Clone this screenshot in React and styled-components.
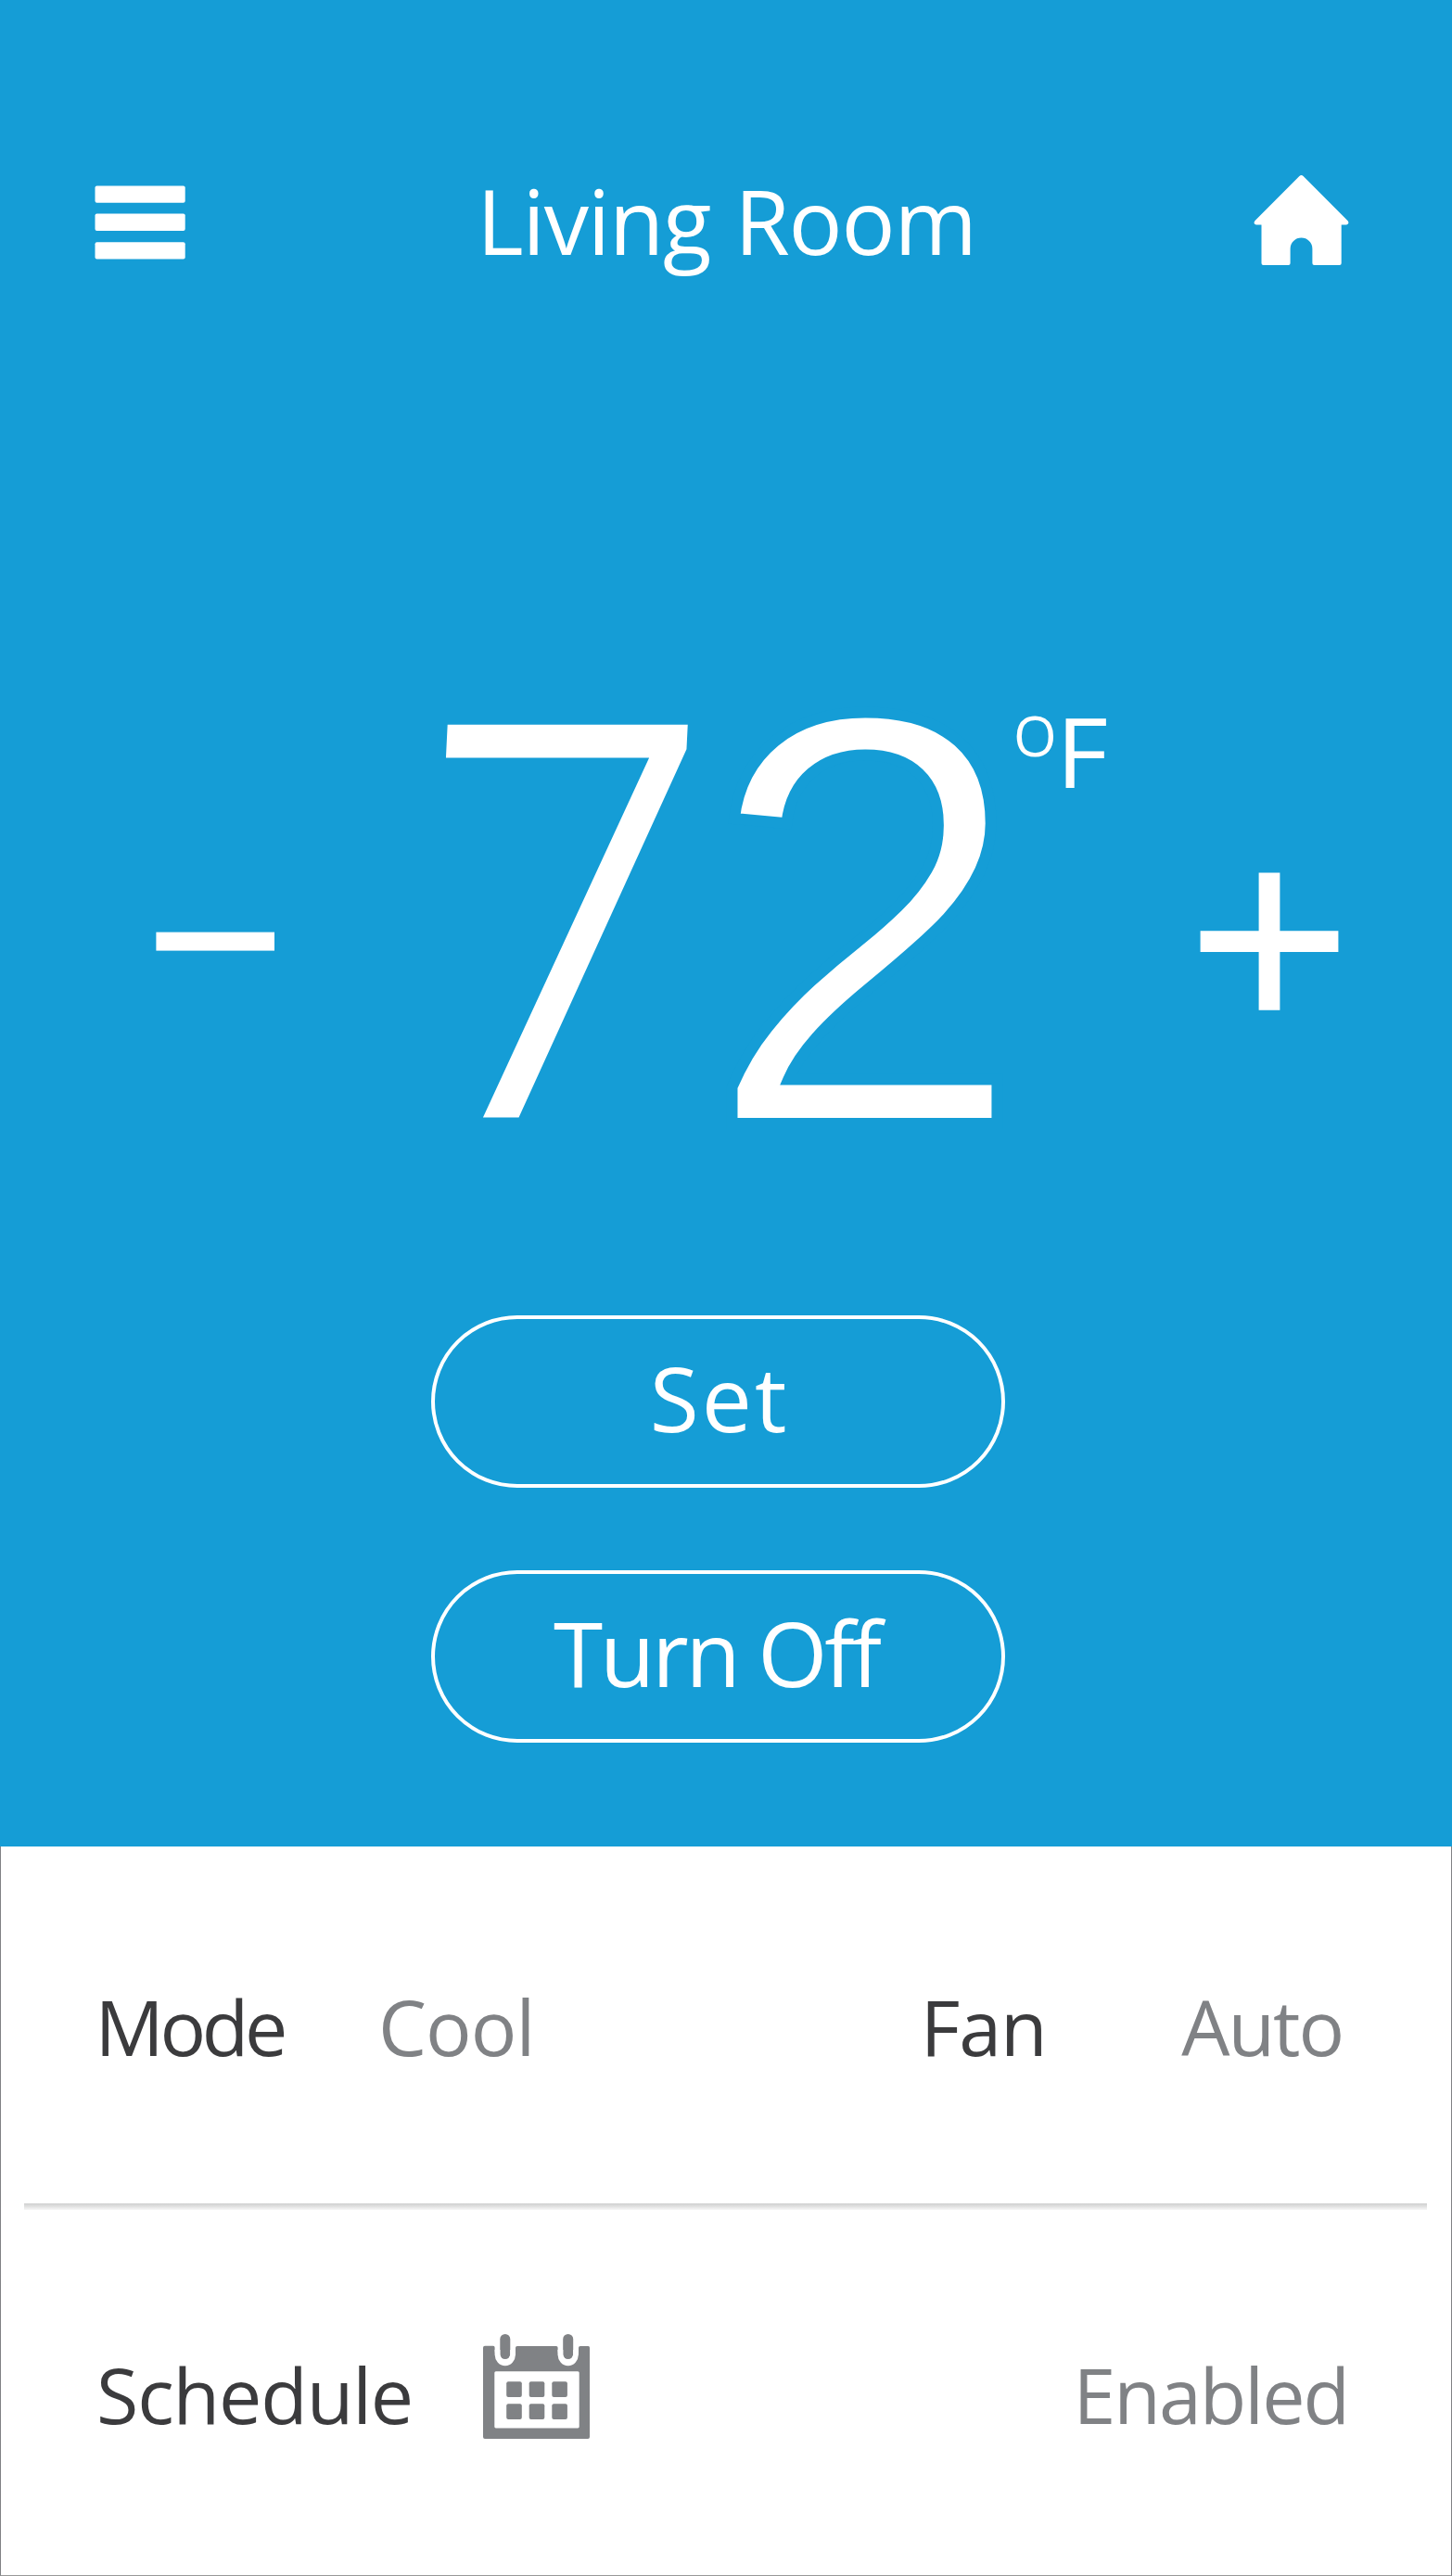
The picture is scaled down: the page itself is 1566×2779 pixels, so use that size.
import React from 'react';
import styled, { createGlobalStyle } from 'styled-components';

const BLUE = '#159dd6';
const GRAY = '#808285';
const INK = '#3b3b3d';

const GlobalStyle = createGlobalStyle`
  * { box-sizing: border-box; }
  body { margin: 0; background: #fff; }
  svg { display: block; flex: none; }
`;

const Screen = styled.main`
  width: 1566px;
  height: 2779px;
  display: flex;
  flex-direction: column;
  overflow: hidden;
  font-family: "Open Sans", "Noto Sans", sans-serif;
`;

const Hero = styled.section`
  height: 1991.7px;
  flex: none;
  display: flex;
  flex-direction: column;
  background: ${BLUE};
  color: #fff;
`;

const Header = styled.header`
  display: flex;
  align-items: flex-start;
  height: 670px;
  padding: 189px 111px 0 102px;
`;

const IconButton = styled.button`
  flex: none;
  margin: ${(p) => p.$top || 0}px 0 0;
  padding: 0;
  border: 0;
  background: none;
  color: inherit;
`;

const Title = styled.h1`
  flex: 1;
  margin: 1px 0 0;
  padding-left: 15px;
  text-align: center;
  font-size: 96.6px;
  line-height: 1;
  font-weight: 400;
  letter-spacing: -1.2px;
  word-spacing: 2px;
`;

const Dial = styled.div`
  display: flex;
  align-items: flex-start;
  height: 749px;
  padding: 0 122px 0 168px;
`;

const Reading = styled.div`
  flex: none;
  display: flex;
  align-items: flex-start;
  width: 618px;
  margin-left: 164px;
  line-height: 1;
`;

const Digit = styled.span`
  flex: none;
  transform-origin: left top;
`;

/* Light cut, thickened by an outline in the text colour */
const TensDigit = styled(Digit)`
  width: 297.5px;
  margin-top: 14.6px;
  font-size: 581px;
  font-weight: 300;
  -webkit-text-stroke: 9px #fff;
  transform: translateX(3px) skewX(-2.8deg) scaleX(0.934);
`;

/* Regular cut, thinned by an outline in the background colour */
const UnitsDigit = styled(Digit)`
  margin-top: 5px;
  font-family: "Liberation Sans", Arial, sans-serif;
  font-size: 635px;
  -webkit-text-stroke: 12px ${BLUE};
  transform: scaleX(0.988);
`;

const Unit = styled.div`
  flex: none;
  display: flex;
  align-items: flex-start;
  margin: 88px auto 0 15px;
`;

const Degree = styled.span`
  margin-top: 5px;
  width: 46px;
  font-size: 60px;
  line-height: 1;
`;

const Scale = styled.span`
  font-size: 103.6px;
  line-height: 1;
  transform: scaleX(1.05);
  transform-origin: left top;
`;

const Actions = styled.div`
  display: flex;
  flex-direction: column;
  align-items: center;
  gap: 89.3px;
  padding-right: 17px;
`;

const PillButton = styled.button`
  width: 618.6px;
  height: 185.8px;
  padding: 0 0 8px;
  border: 4px solid #fff;
  border-radius: 93px;
  background: none;
  color: #fff;
  font: 400 96.6px/1 "Open Sans", "Noto Sans", sans-serif;
  letter-spacing: ${(p) => p.$tracking}px;
  text-indent: ${(p) => p.$indent}px;
`;

const Panel = styled.section`
  flex: 1;
  display: flex;
  flex-direction: column;
  border: 1px solid ${GRAY};
  border-top: 0;
  border-bottom-color: #999;
  background: #fff;
`;

const SettingRow = styled.div`
  display: grid;
  grid-template-columns: ${(p) => p.$columns};
  align-items: start;
  height: ${(p) => p.$height}px;
  padding: ${(p) => p.$pad};
`;

const Text = styled.span`
  font-size: 82.6px;
  line-height: 1;
  white-space: nowrap;
  letter-spacing: ${(p) => p.$tracking}px;
`;

const Label = styled(Text)`
  color: ${INK};
`;

const Value = styled(Text)`
  color: ${GRAY};
`;

const CalendarSlot = styled.div`
  margin-top: -24.5px;
`;

const Divider = styled.hr`
  flex: none;
  width: 1513px;
  height: 7px;
  margin: 0 25px;
  border: 0;
  background: linear-gradient(#cfd0d0, #e0e0e0 45%, #f7f7f7);
`;

function MenuIcon() {
  return (
    <svg width="98" height="80" viewBox="0 0 98 80" fill="currentColor">
      <rect x="0.5" y="0.4" width="97.2" height="18.3" rx="2" />
      <rect x="0.5" y="30.6" width="97.2" height="18.3" rx="2" />
      <rect x="0.5" y="61.2" width="97.2" height="18.3" rx="2" />
    </svg>
  );
}

function HomeIcon() {
  return (
    <svg width="103" height="98" viewBox="0 0 103 98" fill="currentColor">
      <path d="M49.4 1 Q51.5 -1 53.6 1 L101.4 49 Q102.8 50.6 102.2 52 Q101.6 53.4 100 53.4 H94.7 V95 Q94.7 97 92.7 97 H65.4 Q63.4 97 63.4 95 V79.5 A11.9 11.9 0 0 0 39.6 79.5 V95 Q39.6 97 37.6 97 H10.5 Q8.5 97 8.5 95 V53.4 H3 Q1.3 53.4 0.7 52 Q0.2 50.6 1.6 49 Z" />
    </svg>
  );
}

function MinusIcon() {
  return (
    <svg width="128" height="22" viewBox="0 0 128 22" fill="currentColor">
      <rect x="0.4" y="0.6" width="127.6" height="20" />
    </svg>
  );
}

function PlusIcon() {
  return (
    <svg width="150" height="150" viewBox="0 0 150 150" fill="currentColor">
      <path d="M63.6 0.5 H86.4 V63.3 H149.4 V86 H86.4 V148.8 H63.6 V86 H0.6 V63.3 H63.6 Z" />
    </svg>
  );
}

function CalendarIcon() {
  return (
    <svg width="116" height="114" viewBox="0 0 116 114" fill={GRAY}>
      <path
        fillRule="evenodd"
        d="M2 12.8 H11 Q12.6 12.8 12.6 14.4 V18 A11.2 11.2 0 0 0 35 18 V14.8 Q35 13 36.8 13 H79 Q80.6 13 80.6 14.8 V18 A11.2 11.2 0 0 0 103 18 V14.8 Q103 13 104.8 13 H113.5 Q115 13 115 14.8 V111 Q115 113 113 113 H2 Q0 113 0 111 V14.8 Q0 12.8 2 12.8 Z M13.8 40.3 Q12.3 40.3 12.3 41.8 V100 Q12.3 101.4 13.8 101.4 H102.2 Q103.7 101.4 103.7 100 V41.8 Q103.7 40.3 102.2 40.3 Z"
      />
      <rect x="18.3" y="0" width="11" height="27" rx="5.5" />
      <rect x="86.2" y="0" width="11" height="27" rx="5.5" />
      <path
        d="M15.5 17 V21.7 A8.3 9.6 0 0 0 32.1 21.7 V17 M83.4 17 V21.7 A8.3 9.6 0 0 0 100 21.7 V17"
        fill="none"
        stroke="#fff"
        strokeWidth="5.8"
      />
      {[51.2, 75.2].map((y) =>
        [25.2, 49.7, 74.3].map((x) => (
          <rect key={`${x}-${y}`} x={x} y={y} width="16.6" height="16.8" rx="2" />
        ))
      )}
    </svg>
  );
}

export default function App() {
  return (
    <Screen>
      <GlobalStyle />
      <Hero>
        <Header>
          <IconButton $top={11} aria-label="Menu"><MenuIcon /></IconButton>
          <Title>Living Room</Title>
          <IconButton aria-label="Home"><HomeIcon /></IconButton>
        </Header>
        <Dial>
          <IconButton $top={335} aria-label="Decrease temperature"><MinusIcon /></IconButton>
          <Reading>
            <TensDigit>7</TensDigit>
            <UnitsDigit>2</UnitsDigit>
          </Reading>
          <Unit>
            <Degree>O</Degree>
            <Scale>F</Scale>
          </Unit>
          <IconButton $top={271} aria-label="Increase temperature"><PlusIcon /></IconButton>
        </Dial>
        <Actions>
          <PillButton $tracking={3} $indent={3}>Set</PillButton>
          <PillButton $tracking={-3.2} $indent={-4}>Turn Off</PillButton>
        </Actions>
      </Hero>
      <Panel>
        <SettingRow $height={385} $pad="153.5px 0 0 101.6px" $columns="305.4px 584.8px 281.4px auto">
          <Label $tracking={-4.4}>Mode</Label>
          <Value $tracking={-1}>Cool</Value>
          <Label $tracking={-1.2}>Fan</Label>
          <Value $tracking={-2}>Auto</Value>
        </SettingRow>
        <Divider />
        <SettingRow $height={394} $pad="158.5px 0 0 103px" $columns="417px 636.4px auto">
          <Label $tracking={-1.15}>Schedule</Label>
          <CalendarSlot><CalendarIcon /></CalendarSlot>
          <Value $tracking={-2}>Enabled</Value>
        </SettingRow>
      </Panel>
    </Screen>
  );
}
